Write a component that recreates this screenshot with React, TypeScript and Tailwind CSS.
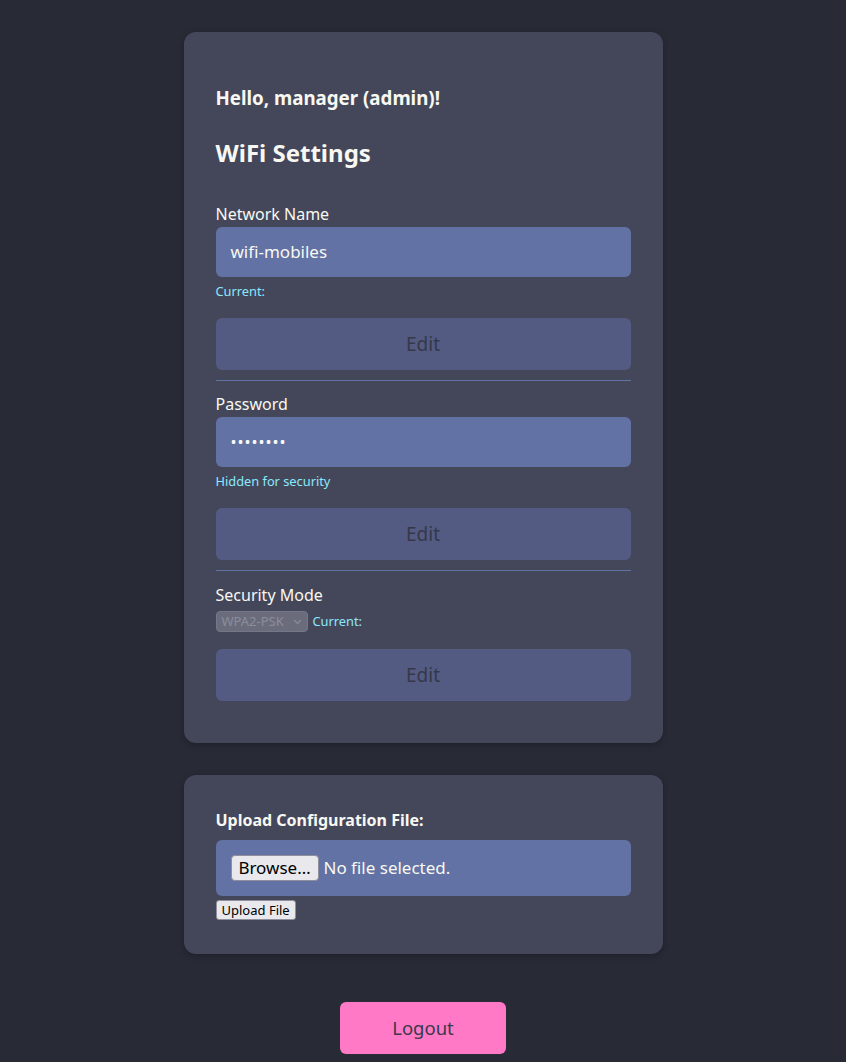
import React from "react";

function Divider() {
  return <div className="h-px bg-[#6272a4] mt-[10px]" />;
}

function EditButton({ className = "" }: { className?: string }) {
  return (
    <button
      disabled
      className={`w-full h-[52px] rounded-[6px] bg-[#535b83] text-[19px] text-[#363849] ${className}`}
    >
      Edit
    </button>
  );
}

export default function App() {
  return (
    <div
      className="min-h-[1062px] w-full bg-[#282a36] flex flex-col items-center pt-[32px] text-[#f8f8f2]"
      style={{ fontFamily: '"Noto Sans", "Open Sans", sans-serif' }}
    >
      <div className="w-[479px] rounded-[12px] bg-[#44475a] px-[32px] pt-[32px] pb-[42px] shadow-[0_2px_6px_rgba(0,0,0,0.25)]">
        <h3 className="mt-[21px] text-[18.72px] leading-[26px] font-bold">Hello, manager (admin)!</h3>
        <h2 className="mt-[26px] text-[24px] leading-[32px] font-bold">WiFi Settings</h2>

        <label className="block mt-[33px] text-[16px] leading-[24px]">Network Name</label>
        <div className="mt-[1px] h-[50px] rounded-[6px] bg-[#6272a4] flex items-center px-[15px] text-[17px]">
          wifi-mobiles
        </div>
        <div className="mt-[6px] text-[12.8px] leading-[16px] text-[#8be9fd]">Current:</div>
        <EditButton className="mt-[19px]" />
        <Divider />

        <label className="block mt-[11px] text-[16px] leading-[24px]">Password</label>
        <div className="mt-[1px] h-[50px] rounded-[6px] bg-[#6272a4] flex items-center px-[15px] text-[16px] tracking-[1px]">
          ••••••••
        </div>
        <div className="mt-[6px] text-[12.8px] leading-[16px] text-[#8be9fd]">Hidden for security</div>
        <EditButton className="mt-[19px]" />
        <Divider />

        <label className="block mt-[12px] text-[16px] leading-[24px]">Security Mode</label>
        <div className="mt-[4px] flex items-center gap-[5px]">
          <div className="w-[92px] h-[21px] rounded-[4px] bg-[#6a6c7c] border border-[#74768a] flex items-center justify-between px-[5px] text-[13px] text-[#8b8d9c]">
            <span>WPA2-PSK</span>
            <svg width="9" height="6" viewBox="0 0 9 6" fill="none">
              <path d="M1 1l3.5 3.5L8 1" stroke="#8b8d9c" strokeWidth="1.2" />
            </svg>
          </div>
          <span className="text-[12.8px] text-[#8be9fd]">Current:</span>
        </div>
        <EditButton className="mt-[17px]" />
      </div>

      <div className="mt-[32px] w-[479px] rounded-[12px] bg-[#44475a] px-[32px] pt-[33px] pb-[34px] shadow-[0_2px_6px_rgba(0,0,0,0.25)]">
        <div className="text-[16px] leading-[24px] font-bold">Upload Configuration File:</div>
        <div className="mt-[8px] h-[56px] rounded-[6px] bg-[#6272a4] flex items-center px-[15px] text-[17px]">
          <span className="h-[26px] w-[88px] rounded-[4px] bg-[#e9e9ed] border border-[#8f8f9d] text-black flex items-center justify-center">
            Browse…
          </span>
          <span className="ml-[5px]">No file selected.</span>
        </div>
        <button className="mt-[4px] h-[20px] px-[5px] rounded-[3px] bg-[#e9e9ed] border border-[#8f8f9d] text-black text-[13px] leading-[18px] flex items-center">
          Upload File
        </button>
      </div>

      <button className="mt-[48px] w-[166px] h-[52px] rounded-[6px] bg-[#ff79c6] text-[18.5px] text-[#383a4a]">
        Logout
      </button>
    </div>
  );
}
